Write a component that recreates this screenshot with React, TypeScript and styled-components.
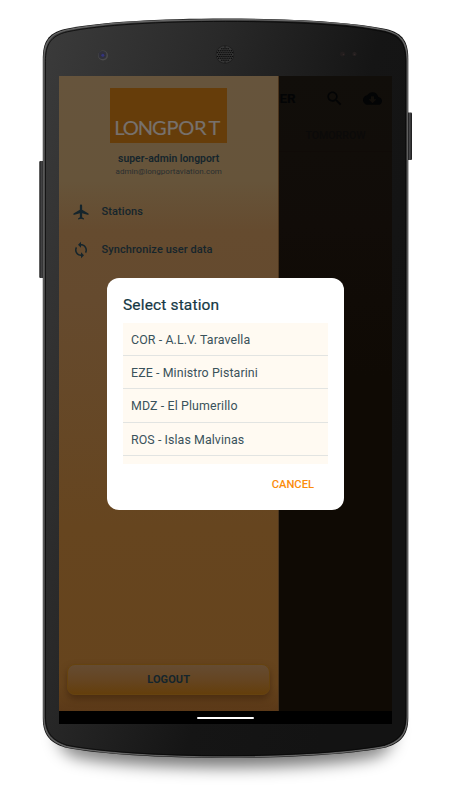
import React from 'react';
import styled, { createGlobalStyle } from 'styled-components';

const GlobalStyle = createGlobalStyle`
  * { box-sizing: border-box; }
  body { margin: 0; background: #fff; font-family: Roboto, "Liberation Sans", sans-serif; }
`;

const Stage = styled.main`
  position: relative;
  width: 450px;
  height: 800px;
  padding: 76px 58px 76px 58.5px;
  overflow: hidden;
`;

const DeviceArt = styled.svg`
  position: absolute;
  inset: 0;
`;

const Screen = styled.section`
  position: relative;
  width: 333.5px;
  height: 648px;
  display: flex;
  flex-direction: column;
  background: #000;
`;

const Content = styled.div`
  height: 635.3px;
  display: flex;
`;

const Drawer = styled.aside`
  width: 220.9px;
  display: flex;
  flex-direction: column;
  align-items: center;
  padding: 11.5px 7.5px 16px 8px;
  background: linear-gradient(#66543c 0, #66543a 105px, #654b2f 155px, #654a2e 225px, #66451f 450px, #66441d 608px, #5b3918 100%);
  border-right: 1px solid #49331c;
  color: #15252c;
`;

const Logo = styled.svg`
  display: block;
  width: 117px;
  height: 55px;
  background: #663d0a;
  flex: none;
`;

const UserName = styled.div`
  margin-top: 9px;
  font-size: 10.4px;
  line-height: 14px;
  font-weight: 600;
  white-space: nowrap;
`;

const Email = styled.div`
  font-size: 8px;
  line-height: 11px;
  letter-spacing: 0.04px;
  color: #2a2f30;
`;

const Menu = styled.nav`
  width: 100%;
  margin-top: 16.6px;
`;

const MenuItem = styled.div`
  height: 37.7px;
  display: flex;
  align-items: center;
  gap: 12px;
  padding-left: 5px;
  font-size: 11px;
  font-weight: 500;
  letter-spacing: 0.1px;
  svg { width: 18px; height: 18px; fill: currentColor; }
`;

const Logout = styled.button`
  width: 203.5px;
  height: 31px;
  margin-top: auto;
  border: 1px solid #66430f;
  border-radius: 8px;
  background: linear-gradient(#654c32, #654522 50%, #643e0c);
  box-shadow: 0 4px 7px #3c210b99;
  color: #15252c;
  font: 700 11px Roboto, sans-serif;
  letter-spacing: 0.1px;
`;

const Backdrop = styled.div`
  flex: 1;
  min-width: 0;
  background: linear-gradient(#110e0a, #110c08 150px, #0f0a04 300px);
  color: #030405;
`;

const AppBar = styled.header`
  height: 44px;
  display: flex;
  align-items: center;
  font-size: 13.5px;
  font-weight: 700;
  svg { width: 19px; height: 19px; fill: currentColor; }
`;

const TitleEnd = styled.span`
  width: 46px;
`;

const CloudSlot = styled.span`
  display: flex;
  margin-left: 19px;
`;

const Tab = styled.div`
  height: 32px;
  padding-left: 26px;
  line-height: 32px;
  font-size: 10.6px;
  font-weight: 500;
  color: #0b0a09;
  border-bottom: 1px solid #100b08;
`;

const NavBar = styled.footer`
  flex: 1;
  display: flex;
  justify-content: center;
  padding-top: 5.5px;
`;

const HomeHandle = styled.div`
  width: 57px;
  height: 2.5px;
  border-radius: 1px;
  background: #fff;
`;

const Dialog = styled.div`
  position: absolute;
  left: 48.5px;
  top: 201.6px;
  width: 236.5px;
  height: 232.1px;
  border-radius: 12px;
  padding: 17px 16px 0;
  background: #fff;
  color: #153844;
`;

const DialogTitle = styled.h2`
  margin: 0 0 8px;
  height: 20px;
  font-size: 15.5px;
  line-height: 20px;
  font-weight: 450;
  letter-spacing: 0.15px;
  -webkit-text-stroke: 0.2px #153844;
`;

const StationList = styled.div`
  height: 141.8px;
  background: #fffaf2;
`;

const StationRow = styled.div`
  height: 33.4px;
  padding-left: 8px;
  border-bottom: 1px solid #e2e4e2;
  font-size: 12.4px;
  line-height: 34.2px;
  color: #3a525b;
  letter-spacing: ${({ $spacing }: { $spacing: number }) => $spacing}px;
`;

const Cancel = styled.button`
  display: block;
  margin: 12.7px 13.5px 0 auto;
  padding: 0;
  border: 0;
  background: none;
  color: #fb8c0b;
  font: 480 11.2px/16px Roboto, sans-serif;
`;

const stations = [
  { name: 'COR - A.L.V. Taravella', spacing: 0.1 },
  { name: 'EZE - Ministro Pistarini', spacing: 0.1 },
  { name: 'MDZ - El Plumerillo', spacing: 0.12 },
  { name: 'ROS - Islas Malvinas', spacing: 0.08 },
];

const bodyPath = 'M42.8 59 C42.8 42 48 33 65 29 C98 22 160 18.5 225.5 18.5 C291 18.5 353 22 386 29 C403 33 408.3 42 408.3 59 V718 C408.3 736 400 743 386 747.5 C353 754 291 758 225.5 758 C160 758 98 754 65 747.5 C51 743 42.8 736 42.8 718Z';

const grille: [number, number][] = [];
for (let row = -4; row <= 4; row += 1) {
  for (let col = -4; col <= 4; col += 1) {
    const x = col * 2.1 + (row % 2 ? 1.05 : 0);
    const y = row * 1.9;
    if (x * x + y * y < 60) grille.push([225 + x, 54.5 + y]);
  }
}

function PhoneBody() {
  return (
    <DeviceArt width="450" height="800" viewBox="0 0 450 800" aria-hidden="true">
      <defs>
        <linearGradient id="body" x1="0" y1="0" x2="1" y2="0.55">
          <stop offset="0" stopColor="#3b3b3b" />
          <stop offset="0.38" stopColor="#292929" />
          <stop offset="0.72" stopColor="#151515" />
          <stop offset="1" stopColor="#131313" />
        </linearGradient>
        <linearGradient id="key" x1="0" x2="1">
          <stop offset="0" stopColor="#191919" />
          <stop offset="0.55" stopColor="#4a4a4c" />
          <stop offset="1" stopColor="#161616" />
        </linearGradient>
        <linearGradient id="shadowFade" x2="0" y2="1">
          <stop offset="0.92" stopColor="#000" stopOpacity="0" />
          <stop offset="0.98" stopColor="#000" stopOpacity="0.55" />
        </linearGradient>
        <filter id="soft" x="-10%" y="-10%" width="120%" height="120%">
          <feGaussianBlur stdDeviation="8" />
        </filter>
      </defs>
      <path d={bodyPath} fill="url(#shadowFade)" filter="url(#soft)" transform="translate(15.8 9) scale(.93 1)" />
      <rect x="39.3" y="161" width="5" height="117" rx="1" fill="url(#key)" />
      <rect x="407" y="112.5" width="5" height="47.5" rx="1" fill="url(#key)" />
      <path d={bodyPath} fill="#0c0c0c" />
      <path d={bodyPath} fill="url(#body)" stroke="#646464" strokeWidth="1.5" transform="translate(1.35 1.2) scale(.994 .997)" />
      <path d={bodyPath} fill="none" stroke="#080808" strokeWidth="0.8" transform="translate(3.2 3) scale(.986 .993)" />
      <circle cx="103" cy="55.5" r="5" fill="#4b4b4b" />
      <circle cx="102.5" cy="55" r="4" fill="#30303a" />
      <circle cx="102.8" cy="55.2" r="1.5" fill="#34347d" />
      <circle cx="225" cy="54.5" r="9.3" fill="#1d1d1d" />
      <circle cx="225" cy="54.5" r="8.5" fill="#363636" />
      {grille.map(([cx, cy]) => (
        <circle key={`${cx}-${cy}`} cx={cx} cy={cy} r="0.72" fill="#080808" />
      ))}
      <circle cx="342.5" cy="54" r="2.5" fill="#211d1d" />
      <circle cx="354.5" cy="54" r="2.2" fill="#231f1f" />
      <circle cx="343.5" cy="54.5" r="0.8" fill="#332828" />
      <circle cx="354.5" cy="54.5" r="0.8" fill="#332828" />
    </DeviceArt>
  );
}

function PlaneIcon() {
  return (
    <svg viewBox="0 0 24 24">
      <path d="M22 16v-2l-8.5-5V3.5C13.5 2.67 12.83 2 12 2s-1.5.67-1.5 1.5V9L2 14v2l8.5-2.5V19L8 20.5V22l4-1 4 1v-1.5L13.5 19v-5.5L22 16z" />
    </svg>
  );
}

function SyncIcon() {
  return (
    <svg viewBox="0 0 24 24">
      <path d="M12 4V1L8 5l4 4V6c3.31 0 6 2.69 6 6 0 1.01-.25 1.97-.7 2.8l1.46 1.46C19.54 15.03 20 13.57 20 12c0-4.42-3.58-8-8-8zm0 14c-3.31 0-6-2.69-6-6 0-1.01.25-1.97.7-2.8L5.24 7.74C4.46 8.97 4 10.43 4 12c0 4.42 3.58 8 8 8v3l4-4-4-4v3z" />
    </svg>
  );
}

function SearchIcon() {
  return (
    <svg viewBox="0 0 24 24">
      <path d="M15.5 14h-.79l-.28-.27C15.41 12.59 16 11.11 16 9.5 16 5.91 13.09 3 9.5 3S3 5.91 3 9.5 5.91 16 9.5 16c1.61 0 3.09-.59 4.23-1.57l.27.28v.79l5 4.99L20.49 19l-4.99-5zm-6 0C7.01 14 5 11.99 5 9.5S7.01 5 9.5 5 14 7.01 14 9.5 11.99 14 9.5 14z" />
    </svg>
  );
}

function CloudDownloadIcon() {
  return (
    <svg viewBox="0 0 24 24">
      <path d="M19.35 10.04C18.67 6.59 15.64 4 12 4 9.11 4 6.6 5.64 5.35 8.04 2.34 8.36 0 10.91 0 14c0 3.31 2.69 6 6 6h13c2.76 0 5-2.24 5-5 0-2.64-2.05-4.78-4.65-4.96zM17 13l-5 5-5-5h3V9h4v4h3z" />
    </svg>
  );
}

export default function App() {
  return (
    <>
      <GlobalStyle />
      <Stage>
        <PhoneBody />
        <Screen>
          <Content>
            <Drawer>
              <Logo viewBox="0 0 117 55">
                <text transform="scale(1.08 1)" x="3.9 11.8 25.8 38.8 52.4 63.2 77.8 91.2" y="47.2" fill="#77716d" stroke="#77716d" strokeWidth="0.2" fontFamily="Lato" fontSize="18.6">LONGPORT</text>
                <rect x="84.5" y="42" width="4" height="6" fill="#663d0a" />
              </Logo>
              <UserName>super-admin longport</UserName>
              <Email>admin@longportaviation.com</Email>
              <Menu>
                <MenuItem><PlaneIcon />Stations</MenuItem>
                <MenuItem><SyncIcon />Synchronize user data</MenuItem>
              </Menu>
              <Logout>LOGOUT</Logout>
            </Drawer>
            <Backdrop>
              <AppBar>
                <TitleEnd>ER</TitleEnd>
                <SearchIcon />
                <CloudSlot><CloudDownloadIcon /></CloudSlot>
              </AppBar>
              <Tab>TOMORROW</Tab>
            </Backdrop>
          </Content>
          <NavBar><HomeHandle /></NavBar>
          <Dialog role="dialog">
            <DialogTitle>Select station</DialogTitle>
            <StationList>
              {stations.map(({ name, spacing }) => (
                <StationRow key={name} $spacing={spacing}>{name}</StationRow>
              ))}
            </StationList>
            <Cancel>CANCEL</Cancel>
          </Dialog>
        </Screen>
      </Stage>
    </>
  );
}
